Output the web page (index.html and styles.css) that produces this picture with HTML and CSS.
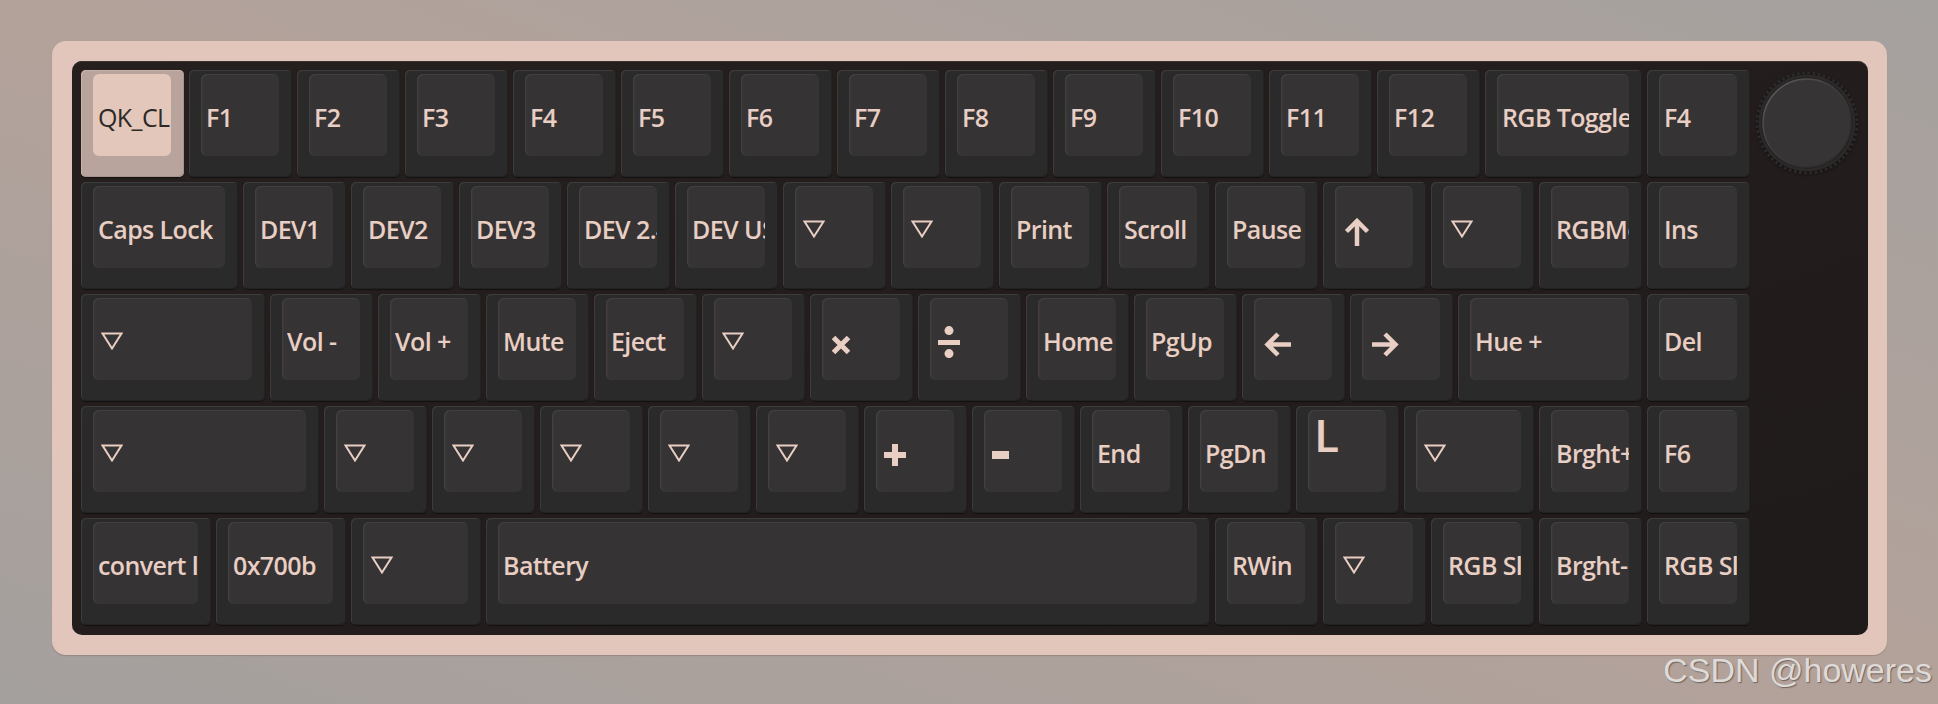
FILE: index.html
```html
<!DOCTYPE html>
<html>
<head>
<meta charset="utf-8">
<title>Keyboard</title>
<link rel="stylesheet" href="styles.css">
</head>
<body>
<div class="case">
  <div class="plate">
    <div class="keys">
      <div class="row">
        <div class="key u1 active"><div class="cap"><span>QK_CL</span></div></div>
        <div class="key u1"><div class="cap"><span>F1</span></div></div>
        <div class="key u1"><div class="cap"><span>F2</span></div></div>
        <div class="key u1"><div class="cap"><span>F3</span></div></div>
        <div class="key u1"><div class="cap"><span>F4</span></div></div>
        <div class="key u1"><div class="cap"><span>F5</span></div></div>
        <div class="key u1"><div class="cap"><span>F6</span></div></div>
        <div class="key u1"><div class="cap"><span>F7</span></div></div>
        <div class="key u1"><div class="cap"><span>F8</span></div></div>
        <div class="key u1"><div class="cap"><span>F9</span></div></div>
        <div class="key u1"><div class="cap"><span>F10</span></div></div>
        <div class="key u1"><div class="cap"><span>F11</span></div></div>
        <div class="key u1"><div class="cap"><span>F12</span></div></div>
        <div class="key u15"><div class="cap"><span>RGB Toggle</span></div></div>
        <div class="key u1"><div class="cap"><span>F4</span></div></div>
      </div>
      <div class="row">
        <div class="key u15"><div class="cap"><span>Caps Lock</span></div></div>
        <div class="key u1"><div class="cap"><span>DEV1</span></div></div>
        <div class="key u1"><div class="cap"><span>DEV2</span></div></div>
        <div class="key u1"><div class="cap"><span>DEV3</span></div></div>
        <div class="key u1"><div class="cap"><span>DEV 2.4</span></div></div>
        <div class="key u1"><div class="cap"><span>DEV USB</span></div></div>
        <div class="key u1"><div class="cap"><svg class="tri" viewBox="0 0 22 18" width="22" height="18"><path d="M1.5 1.5H20.5L11 16.5Z"/></svg></div></div>
        <div class="key u1"><div class="cap"><svg class="tri" viewBox="0 0 22 18" width="22" height="18"><path d="M1.5 1.5H20.5L11 16.5Z"/></svg></div></div>
        <div class="key u1"><div class="cap"><span>Print</span></div></div>
        <div class="key u1"><div class="cap"><span>Scroll</span></div></div>
        <div class="key u1"><div class="cap"><span>Pause</span></div></div>
        <div class="key u1"><div class="cap"><svg class="arrow up" viewBox="0 0 26 28" width="26" height="28"><path d="M13 28V3M2.5 13.5L13 3L23.5 13.5"/></svg></div></div>
        <div class="key u1"><div class="cap"><svg class="tri" viewBox="0 0 22 18" width="22" height="18"><path d="M1.5 1.5H20.5L11 16.5Z"/></svg></div></div>
        <div class="key u1"><div class="cap"><span>RGBMode</span></div></div>
        <div class="key u1"><div class="cap"><span>Ins</span></div></div>
      </div>
      <div class="row">
        <div class="key u175"><div class="cap"><svg class="tri" viewBox="0 0 22 18" width="22" height="18"><path d="M1.5 1.5H20.5L11 16.5Z"/></svg></div></div>
        <div class="key u1"><div class="cap"><span>Vol -</span></div></div>
        <div class="key u1"><div class="cap"><span>Vol +</span></div></div>
        <div class="key u1"><div class="cap"><span>Mute</span></div></div>
        <div class="key u1"><div class="cap"><span>Eject</span></div></div>
        <div class="key u1"><div class="cap"><svg class="tri" viewBox="0 0 22 18" width="22" height="18"><path d="M1.5 1.5H20.5L11 16.5Z"/></svg></div></div>
        <div class="key u1"><div class="cap"><svg class="sym times" viewBox="0 0 22 20" width="22" height="20"><path d="M3.5 2.5L18.5 17.5M18.5 2.5L3.5 17.5"/></svg></div></div>
        <div class="key u1"><div class="cap"><svg class="sym divide" viewBox="0 0 22 32" width="22" height="32"><circle cx="11" cy="4.6" r="4.5"/><rect x="0" y="14" width="22" height="5"/><circle cx="11" cy="27.6" r="4.5"/></svg></div></div>
        <div class="key u1"><div class="cap"><span>Home</span></div></div>
        <div class="key u1"><div class="cap"><span>PgUp</span></div></div>
        <div class="key u1"><div class="cap"><svg class="arrow side" viewBox="0 0 27 25" width="27" height="25"><path d="M27 12.5H3M14 2L3.5 12.5L14 23"/></svg></div></div>
        <div class="key u1"><div class="cap"><svg class="arrow side" viewBox="0 0 27 25" width="27" height="25"><path d="M0 12.5H24M13 2L23.5 12.5L13 23"/></svg></div></div>
        <div class="key u175"><div class="cap"><span>Hue +</span></div></div>
        <div class="key u1"><div class="cap"><span>Del</span></div></div>
      </div>
      <div class="row">
        <div class="key u225"><div class="cap"><svg class="tri" viewBox="0 0 22 18" width="22" height="18"><path d="M1.5 1.5H20.5L11 16.5Z"/></svg></div></div>
        <div class="key u1"><div class="cap"><svg class="tri" viewBox="0 0 22 18" width="22" height="18"><path d="M1.5 1.5H20.5L11 16.5Z"/></svg></div></div>
        <div class="key u1"><div class="cap"><svg class="tri" viewBox="0 0 22 18" width="22" height="18"><path d="M1.5 1.5H20.5L11 16.5Z"/></svg></div></div>
        <div class="key u1"><div class="cap"><svg class="tri" viewBox="0 0 22 18" width="22" height="18"><path d="M1.5 1.5H20.5L11 16.5Z"/></svg></div></div>
        <div class="key u1"><div class="cap"><svg class="tri" viewBox="0 0 22 18" width="22" height="18"><path d="M1.5 1.5H20.5L11 16.5Z"/></svg></div></div>
        <div class="key u1"><div class="cap"><svg class="tri" viewBox="0 0 22 18" width="22" height="18"><path d="M1.5 1.5H20.5L11 16.5Z"/></svg></div></div>
        <div class="key u1"><div class="cap"><svg class="sym plus" viewBox="0 0 22 22" width="22" height="22"><rect x="0" y="8" width="22" height="6"/><rect x="8" y="0" width="6" height="22"/></svg></div></div>
        <div class="key u1"><div class="cap"><svg class="sym minus" viewBox="0 0 17 8" width="17" height="8"><rect x="0" y="0" width="17" height="8"/></svg></div></div>
        <div class="key u1"><div class="cap"><span>End</span></div></div>
        <div class="key u1"><div class="cap"><span>PgDn</span></div></div>
        <div class="key u1"><div class="cap top"><span class="big">L</span></div></div>
        <div class="key u125"><div class="cap"><svg class="tri" viewBox="0 0 22 18" width="22" height="18"><path d="M1.5 1.5H20.5L11 16.5Z"/></svg></div></div>
        <div class="key u1"><div class="cap"><span>Brght+</span></div></div>
        <div class="key u1"><div class="cap"><span>F6</span></div></div>
      </div>
      <div class="row">
        <div class="key u125"><div class="cap"><span>convert l</span></div></div>
        <div class="key u125"><div class="cap"><span>0x700b</span></div></div>
        <div class="key u125"><div class="cap"><svg class="tri" viewBox="0 0 22 18" width="22" height="18"><path d="M1.5 1.5H20.5L11 16.5Z"/></svg></div></div>
        <div class="key u675"><div class="cap"><span>Battery</span></div></div>
        <div class="key u1"><div class="cap"><span>RWin</span></div></div>
        <div class="key u1"><div class="cap"><svg class="tri" viewBox="0 0 22 18" width="22" height="18"><path d="M1.5 1.5H20.5L11 16.5Z"/></svg></div></div>
        <div class="key u1"><div class="cap"><span>RGB Sl</span></div></div>
        <div class="key u1"><div class="cap"><span>Brght-</span></div></div>
        <div class="key u1"><div class="cap"><span>RGB Sl</span></div></div>
      </div>
    </div>
    <div class="knob">
      <svg viewBox="0 0 104 104" width="104" height="104">
        <defs>
          <linearGradient id="rim" x1="0" y1="0" x2="1" y2="1">
            <stop offset="0" stop-color="#66615f"/>
            <stop offset="0.45" stop-color="#403c3c"/>
            <stop offset="1" stop-color="#262424"/>
          </linearGradient>
        </defs>
        <circle cx="52" cy="52" r="48.5" fill="#2b2929"/>
        <circle cx="52" cy="52" r="50" fill="none" stroke="#2b2929" stroke-width="3" stroke-dasharray="2.618 2.618"/>
        <circle cx="52" cy="52" r="45.5" fill="#1f1d1d"/>
        <circle cx="52" cy="52" r="44" fill="#373435" stroke="url(#rim)" stroke-width="1.5"/>
      </svg>
    </div>
  </div>
</div>
<div class="watermark">CSDN @howeres</div>
</body>
</html>
```
FILE: styles.css
```css
* {
  box-sizing: border-box;
}

html,
body {
  margin: 0;
}

body {
  width: 1938px;
  height: 704px;
  overflow: hidden;
  position: relative;
  padding: 41px 0 0 52px;
  background: linear-gradient(to top right, #a4a09e 0%, #b3a29a 50%, #a5a19f 100%);
  font-family: "Open Sans", "Noto Sans", sans-serif;
}

.case {
  width: 1835px;
  padding: 20px 19px 20px 20px;
  background: #e2c6bb;
  border-radius: 14px;
  box-shadow: 0 1px 1px rgba(90, 60, 50, 0.25);
}

.plate {
  display: flex;
  align-items: flex-start;
  height: 574px;
  padding: 9px;
  background: linear-gradient(160deg, #251f1e 0%, #221d1c 60%, #1f1b1a 100%);
  border-radius: 10px;
  box-shadow: inset 0 1px 0 #3a3331;
}

.keys {
  display: flex;
  flex-direction: column;
  gap: 5px;
  width: 1669px;
  flex: none;
}

.row {
  display: flex;
  gap: 5px;
  height: 107px;
}

.key {
  flex: none;
  height: 107px;
  border-radius: 5px;
  background: #2b2a2a;
  box-shadow: inset 1px 1px 0 #3d3b3b, inset -1px -1px 0 #232222, 0 1px 1px rgba(0, 0, 0, 0.45);
}

.u1 { width: 103px; }
.u125 { width: 130px; }
.u15 { width: 157px; }
.u175 { width: 184px; }
.u225 { width: 238px; }
.u675 { width: 724px; }

.cap {
  margin: 4px 13px 21px 12px;
  height: 82px;
  border-radius: 6px;
  background: #363334;
  box-shadow: inset 1px 1px 0 #433f3f, inset 2px 0 0 #3b3838;
  display: flex;
  align-items: center;
  padding: 3px 0 0 5px;
  overflow: hidden;
  white-space: nowrap;
  color: #e8cec3;
  font-size: 25px;
  font-weight: 600;
  letter-spacing: -0.6px;
}

.key.active {
  background: #b8a49c;
  box-shadow: inset 1px 1px 0 #c9b4ac, inset -1px -1px 0 #a8938b, 0 1px 1px rgba(0, 0, 0, 0.45);
}

.key.active .cap {
  background: #e3c7bb;
  box-shadow: none;
  color: #2c2928;
  font-weight: 500;
}

.tri {
  flex: none;
  margin-left: 3px;
  fill: none;
  stroke: #e8cec3;
  stroke-width: 2;
  stroke-linejoin: miter;
}

.arrow {
  flex: none;
  fill: none;
  stroke: #e8cec3;
  stroke-width: 4.5;
  stroke-linecap: butt;
  stroke-linejoin: miter;
}

.arrow.up {
  margin: 6px 0 0 4px;
}

.arrow.side {
  margin: 8px 0 0 5px;
}

.sym {
  flex: none;
  margin-left: 3px;
  fill: #e8cec3;
}

.sym.times {
  fill: none;
  stroke: #e8cec3;
  stroke-width: 5;
  margin-top: 9px;
}

.sym.divide {
  margin-top: 3px;
}

.sym.plus,
.sym.minus {
  margin-top: 5px;
}

.cap.top {
  align-items: flex-start;
  padding: 1px 0 0 6px;
}

.big {
  font-size: 46px;
  line-height: 46px;
  font-weight: 600;
  letter-spacing: 0;
}

.knob {
  flex: none;
  width: 104px;
  height: 104px;
  margin: 1px 0 0 5px;
  filter: drop-shadow(0 1px 1px rgba(0, 0, 0, 0.5));
}

.knob svg {
  display: block;
}

.watermark {
  position: absolute;
  right: 6px;
  top: 651px;
  font-family: "Liberation Sans", Arial, sans-serif;
  font-size: 34px;
  line-height: 38px;
  color: #dedad8;
  text-shadow: 1px 1px 1px rgba(60, 50, 45, 0.55);
  white-space: nowrap;
}
```
